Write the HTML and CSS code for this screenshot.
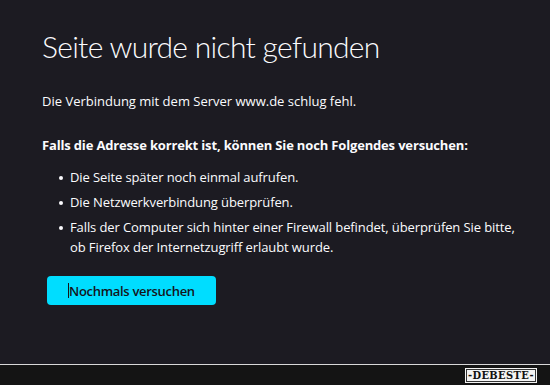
FILE: index.html
```html
<!DOCTYPE html>
<html lang="de">
<head>
<meta charset="utf-8">
<title>Seite wurde nicht gefunden</title>
<link rel="stylesheet" href="styles.css">
</head>
<body>
<div class="page">
  <main class="content">
    <h1 class="title">Seite wurde nicht gefunden</h1>
    <p class="lead">Die Verbindung mit dem Server www.de schlug fehl.</p>
    <p class="hint">Falls die Adresse korrekt ist, können Sie noch Folgendes versuchen:</p>
    <ul class="tips">
      <li>Die Seite später noch einmal aufrufen.</li>
      <li>Die Netzwerkverbindung überprüfen.</li>
      <li>Falls der Computer sich hinter einer Firewall befindet, überprüfen Sie bitte, ob Firefox der Internetzugriff erlaubt wurde.</li>
    </ul>
    <button class="retry"><span class="caret"></span>Nochmals versuchen</button>
  </main>
  <footer class="bar">
    <span class="stamp">-DEBESTE-</span>
  </footer>
</div>
</body>
</html>
```

FILE: styles.css
```css
html, body {
  margin: 0;
  padding: 0;
  background: #1c1b22;
}
.page {
  width: 550px;
  height: 385px;
  display: flex;
  flex-direction: column;
  font-family: "Open Sans", "Noto Sans", sans-serif;
  color: #fbfbfe;
}
.content {
  flex: 1;
  padding: 24px 24px 0 42px;
}
.title {
  margin: 0;
  font-family: "Lato", sans-serif;
  font-weight: 300;
  font-size: 30px;
  line-height: 44px;
  letter-spacing: -0.7px;
}
.lead {
  margin: 23px 0 0;
  font-size: 13px;
  line-height: 20px;
}
.hint {
  margin: 24px 0 0;
  font-size: 13px;
  font-weight: 700;
  line-height: 20px;
  letter-spacing: -0.16px;
}
.tips {
  margin: 12px 0 0;
  padding: 0 0 0 28px;
  font-size: 13px;
  line-height: 20px;
  letter-spacing: -0.1px;
  list-style: none;
}
.tips li {
  position: relative;
  margin-bottom: 5px;
}
.tips li::before {
  content: "";
  position: absolute;
  left: -11px;
  top: 9px;
  width: 4px;
  height: 4px;
  border-radius: 50%;
  background: #fbfbfe;
}
.retry {
  margin: 19px 0 0 5px;
  width: 169px;
  height: 29px;
  border: none;
  border-radius: 4px;
  background: #00ddff;
  color: #15141a;
  font-family: "Open Sans", sans-serif;
  font-size: 13px;
  font-weight: 600;
  letter-spacing: -0.3px;
  text-align: left;
  padding: 0 0 0 21px;
  display: flex;
  align-items: center;
}
.caret {
  display: inline-block;
  width: 1px;
  height: 15px;
  background: #15141a;
}
.bar {
  height: 20px;
  border-top: 1px solid #d8d8d8;
  background: #141414;
  display: flex;
  justify-content: flex-end;
  align-items: center;
  padding-right: 13px;
}
.stamp {
  background: #f4f4f4;
  color: #111;
  font-family: "DejaVu Serif Condensed", "DejaVu Serif", serif;
  font-weight: 700;
  font-size: 11px;
  line-height: 11px;
  padding: 1px 2px;
  border: 1px solid #f4f4f4;
  outline: 1px solid #333;
  outline-offset: -2px;
  letter-spacing: 0.4px;
}
```
